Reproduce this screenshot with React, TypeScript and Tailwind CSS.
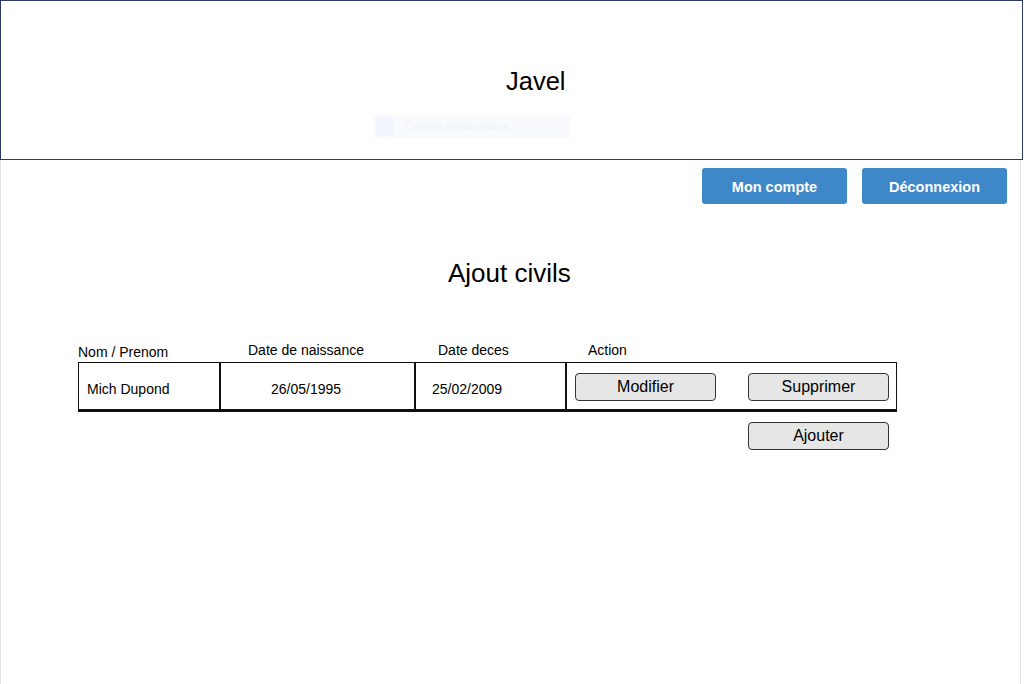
import React from "react";

export default function App() {
  const font = { fontFamily: '"Liberation Sans", Arial, sans-serif' };
  return (
    <div style={font} className="relative w-[1024px] h-[684px] bg-white overflow-hidden text-black flex flex-col">
      {/* header */}
      <div className="relative w-[1023px] h-[160px] shrink-0 border border-[#2e3a66] bg-white">
        <div className="pt-[65px] pl-[505px] text-[25.5px] leading-[30px]">Javel</div>
        <div className="absolute left-[372px] top-[114px] w-[198px] h-[23px] bg-[#f8fafd] flex items-center gap-[10px] pl-[3px]">
          <div className="w-[18px] h-[18px] bg-[#f1f5fb]" />
          <span className="text-[11px] text-[#f0f3f8]">Capture rectangulaire</span>
        </div>
      </div>

      <div className="w-[1021px] flex-1 border-l border-r border-[#e4e4e4] flex flex-col">
        {/* top buttons */}
        <div className="flex justify-end gap-[15px] pr-[13px] mt-[8px]">
          <button className="w-[145px] h-[36px] pt-[3px] rounded-[3px] bg-[#3e88c9] text-white text-[14.5px] font-bold">Mon compte</button>
          <button className="w-[145px] h-[36px] pt-[3px] rounded-[3px] bg-[#3e88c9] text-white text-[14.5px] font-bold">Déconnexion</button>
        </div>

        {/* title */}
        <div className="mt-[54px] pl-[447px] text-[26px] leading-[30px]">Ajout civils</div>

        {/* table header labels */}
        <div className="mt-[53px] flex pl-[77px] text-[14px] leading-[16px] h-[21px]">
          <div className="w-[141px] pt-[3px]">Nom / Prenom</div>
          <div className="w-[195px] pl-[29px] pt-[1px]">Date de naissance</div>
          <div className="w-[151px] pl-[24px] pt-[1px]">Date deces</div>
          <div className="pl-[23px] pt-[1px]">Action</div>
        </div>

        {/* table row */}
        <div className="ml-[77px] w-[819px] h-[50px] flex border-t border-l border-r border-b-[3px] border-b-double border-[#111] text-[14px]">
          <div className="w-[140px] flex items-center pt-[6px] pl-[8px]">Mich Dupond</div>
          <div className="w-[195px] border-l-2 border-[#111] flex items-center pt-[6px] pl-[50px]">26/05/1995</div>
          <div className="w-[151px] border-l-2 border-[#111] flex items-center pt-[6px] pl-[16px]">25/02/2009</div>
          <div className="flex-1 border-l-2 border-[#111] flex items-start pt-[10px] pl-[8px] gap-[32px]">
            <button className="w-[141px] h-[28px] rounded-[4px] border border-[#333] bg-[#e6e6e6] text-[16px]">Modifier</button>
            <button className="w-[141px] h-[28px] rounded-[4px] border border-[#333] bg-[#e6e6e6] text-[16px]">Supprimer</button>
          </div>
        </div>

        <div className="mt-[10px] pl-[747px]">
          <button className="w-[141px] h-[28px] rounded-[4px] border border-[#333] bg-[#e6e6e6] text-[16px]">Ajouter</button>
        </div>
      </div>
    </div>
  );
}
